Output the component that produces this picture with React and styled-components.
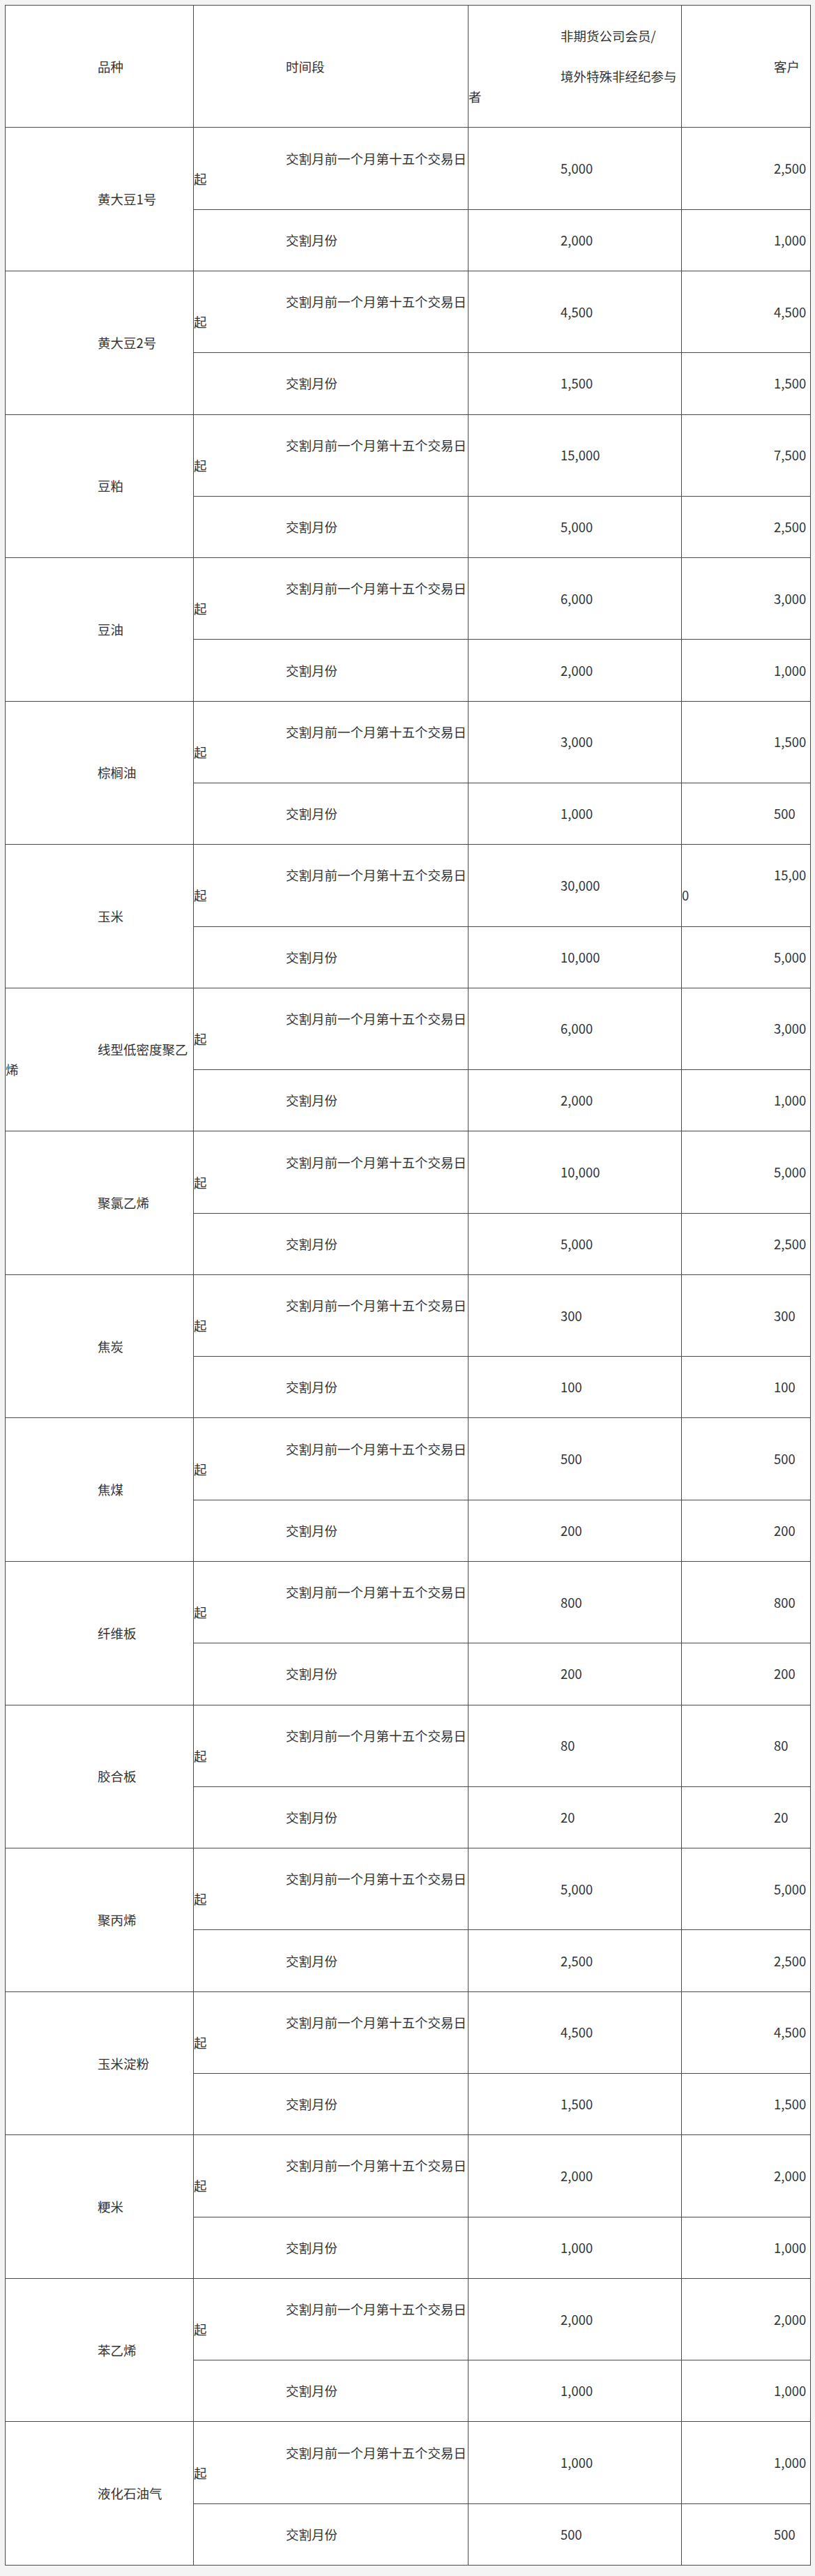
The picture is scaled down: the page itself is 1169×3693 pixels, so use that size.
import styled, { createGlobalStyle } from "styled-components";

const GlobalStyle = createGlobalStyle`
  html, body {
    margin: 0;
    padding: 0;
    background: #f4f4f4;
  }
  body {
    padding: 7px;
    font-family: "Noto Sans CJK SC", "Noto Sans", sans-serif;
    color: #333;
  }
`;

const rows = [
  { name: "黄大豆1号", first: ["5,000", "2,500"], month: ["2,000", "1,000"] },
  { name: "黄大豆2号", first: ["4,500", "4,500"], month: ["1,500", "1,500"] },
  { name: "豆粕", first: ["15,000", "7,500"], month: ["5,000", "2,500"] },
  { name: "豆油", first: ["6,000", "3,000"], month: ["2,000", "1,000"] },
  { name: "棕榈油", first: ["3,000", "1,500"], month: ["1,000", "500"] },
  { name: "玉米", first: ["30,000", "15,000"], month: ["10,000", "5,000"] },
  { name: "线型低密度聚乙烯", first: ["6,000", "3,000"], month: ["2,000", "1,000"] },
  { name: "聚氯乙烯", first: ["10,000", "5,000"], month: ["5,000", "2,500"] },
  { name: "焦炭", first: ["300", "300"], month: ["100", "100"] },
  { name: "焦煤", first: ["500", "500"], month: ["200", "200"] },
  { name: "纤维板", first: ["800", "800"], month: ["200", "200"] },
  { name: "胶合板", first: ["80", "80"], month: ["20", "20"] },
  { name: "聚丙烯", first: ["5,000", "5,000"], month: ["2,500", "2,500"] },
  { name: "玉米淀粉", first: ["4,500", "4,500"], month: ["1,500", "1,500"] },
  { name: "粳米", first: ["2,000", "2,000"], month: ["1,000", "1,000"] },
  { name: "苯乙烯", first: ["2,000", "2,000"], month: ["1,000", "1,000"] },
  { name: "液化石油气", first: ["1,000", "1,000"], month: ["500", "500"] },
];

const App = () => {
  return (
    <>
      <GlobalStyle />
      <Sheet>
        <colgroup>
          <Col width="270px" />
          <Col width="394px" />
          <Col width="306px" />
          <Col width="185px" />
        </colgroup>
        <tbody>
          <tr>
            <Cell>
              <Para>品种</Para>
            </Cell>
            <Cell>
              <Para>时间段</Para>
            </Cell>
            <Cell>
              <Para>非期货公司会员/</Para>
              <Para>境外特殊非经纪参与者</Para>
            </Cell>
            <Cell>
              <Para>客户</Para>
            </Cell>
          </tr>
          {rows.map((r) => (
            <Group key={r.name} {...r} />
          ))}
        </tbody>
      </Sheet>
    </>
  );
};

const Group = ({ name, first, month }) => (
  <>
    <tr>
      <Cell rowSpan={2}>
        <Para>{name}</Para>
      </Cell>
      <Cell>
        <Para>交割月前一个月第十五个交易日起</Para>
      </Cell>
      <Cell>
        <Para>{first[0]}</Para>
      </Cell>
      <Cell>
        <Para>{first[1]}</Para>
      </Cell>
    </tr>
    <tr>
      <Cell>
        <Para>交割月份</Para>
      </Cell>
      <Cell>
        <Para>{month[0]}</Para>
      </Cell>
      <Cell>
        <Para>{month[1]}</Para>
      </Cell>
    </tr>
  </>
);

const Sheet = styled.table`
  width: 1155px;
  table-layout: fixed;
  border-collapse: collapse;
  background: #fff;
`;

const Col = styled.col`
  width: ${(p) => p.width};
`;

const Cell = styled.td`
  padding: 0;
  border: 1px solid #4a4a4a;
  vertical-align: middle;
  font-size: 18.5px;
  line-height: 29px;
  word-break: break-all;
`;

const Para = styled.p`
  margin: 29.15px 0;
  text-indent: 132px;
  text-align: left;
`;

export default App;
